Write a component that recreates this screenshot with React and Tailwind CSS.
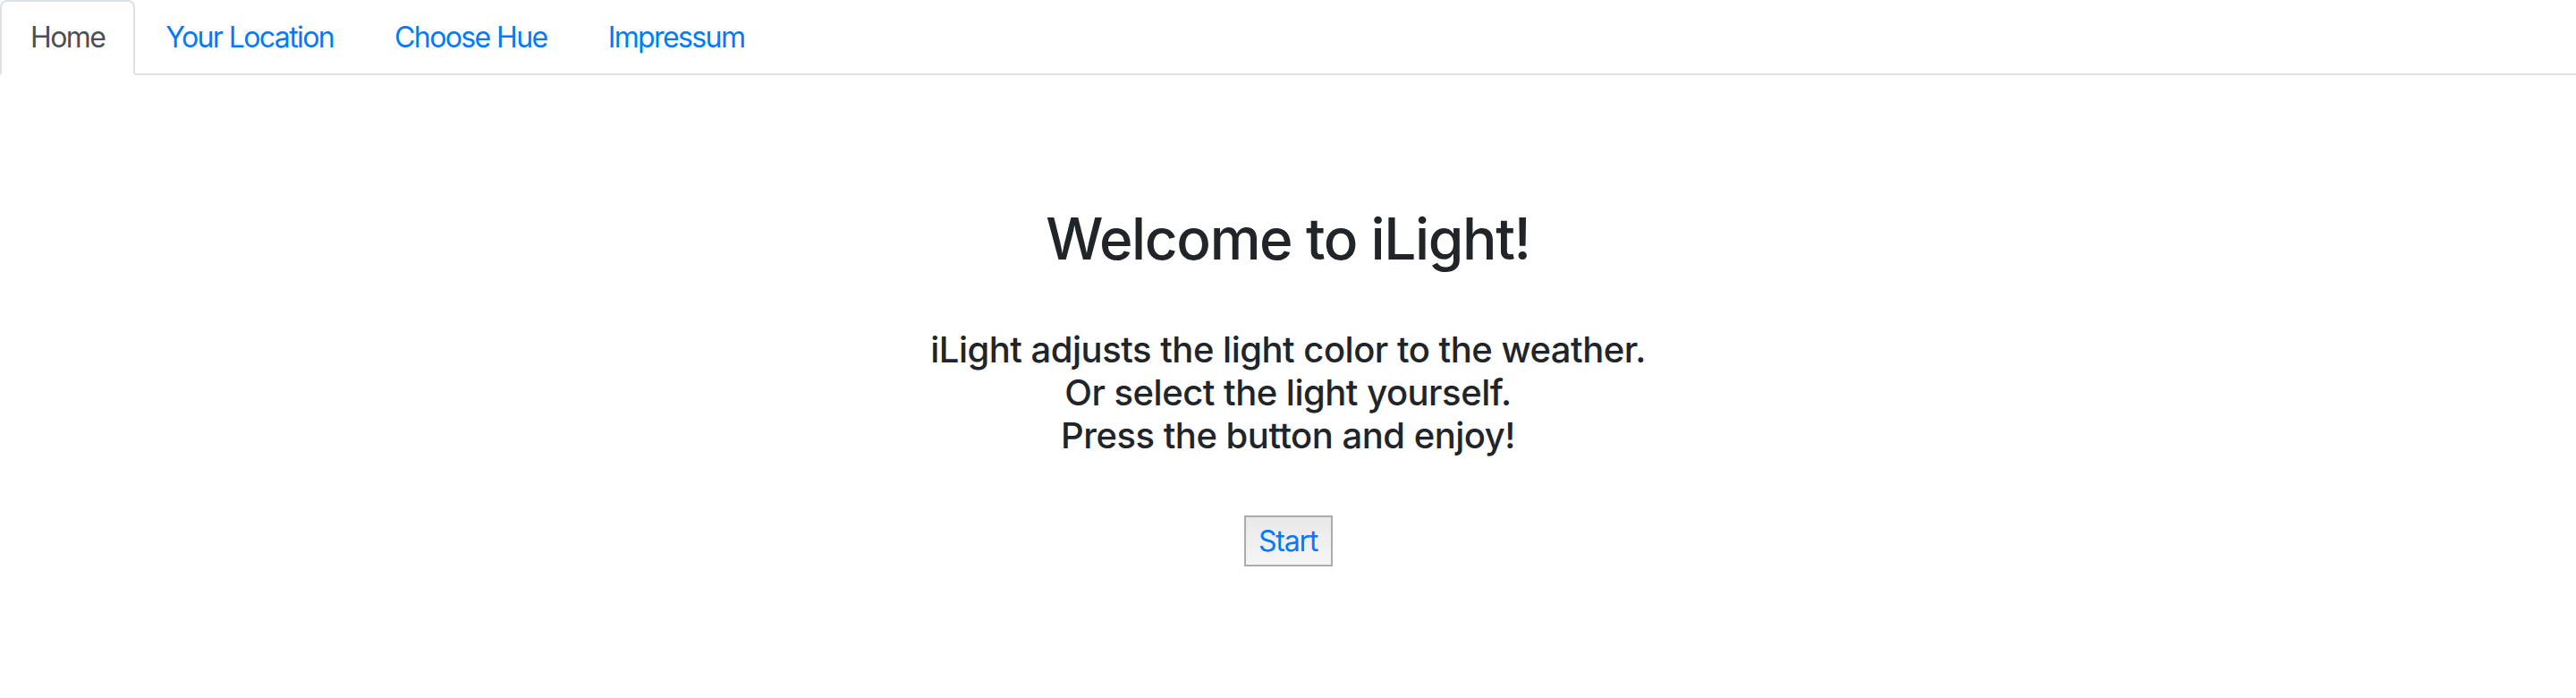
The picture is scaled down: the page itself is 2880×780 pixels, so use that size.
import React from "react";

const tabs = ["Home", "Your Location", "Choose Hue", "Impressum"];

export default function App() {
  return (
    <div className="min-h-[780px] bg-white font-['Inter','Liberation_Sans',sans-serif] text-[#212529]">
      {/* Tabs */}
      <nav className="flex border-b-2 border-[#dee2e6]">
        {tabs.map((t, i) =>
          i === 0 ? (
            <a
              key={t}
              className="-mb-[2px] block border-2 border-[#dee2e6] border-b-white bg-white rounded-t-[8px] px-8 py-4 text-[32px] leading-[48px] tracking-[-1.6px] text-[#495057]"
            >
              {t}
            </a>
          ) : (
            <a
              key={t}
              className="-mb-[2px] block border-2 border-transparent px-8 py-4 text-[32px] leading-[48px] tracking-[-1.6px] text-[#007bff]"
            >
              {t}
            </a>
          )
        )}
      </nav>

      {/* Main */}
      <main className="flex flex-col items-center text-center">
        <h1 className="mt-[144px] text-[64px] font-medium leading-[77px] tracking-[-1.4px]">Welcome to iLight!</h1>
        <h5 className="mt-[62px] text-[40px] font-[550] leading-[48px] tracking-[-0.5px]">
          iLight adjusts the light color to the weather.
          <br />
          Or select the light yourself.
          <br />
          Press the button and enjoy!
        </h5>
        <button className="mt-[65px] flex h-[57px] w-[99px] items-center justify-center border-2 border-[#ababab] bg-gradient-to-b from-[#e9e9e9] to-[#f5f5f5] text-[32px] leading-[40px] tracking-[-1.2px] text-[#007bff]">
          Start
        </button>
      </main>
    </div>
  );
}
